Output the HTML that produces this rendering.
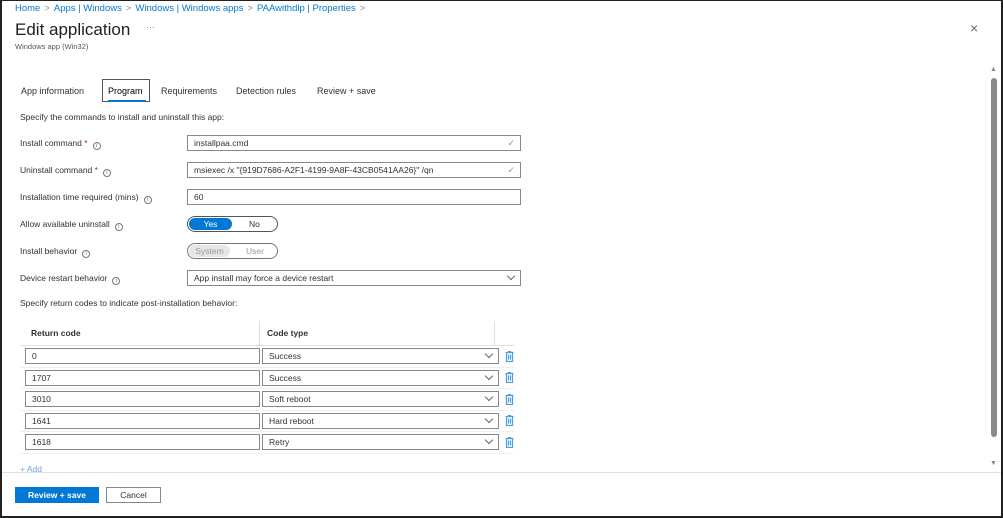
<!DOCTYPE html>
<html><head><meta charset="utf-8"><style>
*{box-sizing:border-box;margin:0;padding:0}
body{width:1003px;height:518px;overflow:hidden;background:#fff;font-family:"Liberation Sans",sans-serif;color:#323130;position:relative}
.frame{position:absolute;left:0;top:0;width:1003px;height:518px;border:2px solid #222;border-top-width:1px;pointer-events:none;z-index:9}
.a{position:absolute;white-space:nowrap}
.bc{top:3px;left:15px;font-size:9.5px;color:#0078d4}
.bc span{color:#888;margin:0 4px}
.lbl{font-size:8.5px;color:#323130}
.req{color:#a4262c}
.i{display:inline-block;width:8px;height:8px;border:1px solid #777;border-radius:50%;font-size:6px;line-height:6px;text-align:center;color:#777;margin-left:5px;vertical-align:-1px}
.in{position:absolute;border:1px solid #8a8886;height:16px;font-size:8.5px;padding:0 6px;line-height:14.5px;color:#323130;background:#fff}
.chk{position:absolute;right:5px;top:0;color:#5cb85c;font-size:9px}
.dd{position:absolute;right:6px;top:2px;width:6px;height:6px;border-right:1px solid #666;border-bottom:1px solid #666;transform:rotate(45deg)}
.tab{top:86px;font-size:9px;color:#323130}
.trash{position:absolute;width:9px;height:11px}
</style></head><body>
<div class="frame"></div>
<div class="a bc">Home<span>&gt;</span>Apps | Windows<span>&gt;</span>Windows | Windows apps<span>&gt;</span>PAAwithdlp | Properties<span>&gt;</span></div>
<div class="a" style="top:20px;left:15px;font-size:17px;color:#201f1e">Edit application</div>
<div class="a" style="top:22px;left:146px;font-size:9px;color:#888">···</div>
<div class="a" style="top:42px;left:15px;font-size:7.5px;color:#555">Windows app (Win32)</div>
<div class="a" style="top:20px;left:970px;font-size:14px;color:#666">×</div>

<div class="a tab" style="left:21px">App information</div>
<div class="a" style="left:102px;top:79px;width:48px;height:23px;border:1px solid #555"></div>
<div class="a tab" style="left:108px;color:#000">Program</div>
<div class="a" style="left:108px;top:100px;width:38px;height:2px;background:#0078d4"></div>
<div class="a tab" style="left:161px">Requirements</div>
<div class="a tab" style="left:236px">Detection rules</div>
<div class="a tab" style="left:317px">Review + save</div>

<div class="a lbl" style="top:112px;left:20px">Specify the commands to install and uninstall this app:</div>

<div class="a lbl" style="top:138px;left:20px">Install command <span class="req">*</span><span class="i">i</span></div>
<div class="in" style="left:187px;top:135px;width:334px">installpaa.cmd<span class="chk">✓</span></div>
<div class="a lbl" style="top:165px;left:20px">Uninstall command <span class="req">*</span><span class="i">i</span></div>
<div class="in" style="left:187px;top:162px;width:334px">msiexec /x "{919D7686-A2F1-4199-9A8F-43CB0541AA26}" /qn<span class="chk">✓</span></div>
<div class="a lbl" style="top:192px;left:20px">Installation time required (mins)<span class="i">i</span></div>
<div class="in" style="left:187px;top:189px;width:334px">60</div>
<div class="a lbl" style="top:219px;left:20px">Allow available uninstall<span class="i">i</span></div>
<div class="a" style="left:187px;top:216px;width:91px;height:16px;border:1px solid #555;border-radius:8px"></div>
<div class="a" style="left:189px;top:218px;width:43px;height:12px;background:#0078d4;border-radius:6px;color:#fff;font-size:8.5px;text-align:center;line-height:12px">Yes</div>
<div class="a lbl" style="left:249px;top:219px">No</div>
<div class="a lbl" style="top:246px;left:20px">Install behavior<span class="i">i</span></div>
<div class="a" style="left:187px;top:243px;width:91px;height:16px;border:1px solid #777;border-radius:8px"></div>
<div class="a" style="left:189px;top:245px;width:41px;height:12px;background:#e6e6e6;border-radius:6px;color:#999;font-size:8.5px;text-align:center;line-height:12px">System</div>
<div class="a lbl" style="left:246px;top:246px;color:#999">User</div>
<div class="a lbl" style="top:273px;left:20px">Device restart behavior<span class="i">i</span></div>
<div class="in" style="left:187px;top:270px;width:334px">App install may force a device restart<span class="dd"></span></div>

<div class="a lbl" style="top:298px;left:20px">Specify return codes to indicate post-installation behavior:</div>

<div class="a" style="left:20px;top:345px;width:494px;height:1px;background:#e1dfdd"></div>
<div class="a" style="left:259px;top:321px;width:1px;height:24px;background:#e1dfdd"></div>
<div class="a" style="left:494px;top:321px;width:1px;height:24px;background:#e1dfdd"></div>
<div class="a" style="left:31px;top:328px;font-size:8.5px;font-weight:bold;color:#323130">Return code</div>
<div class="a" style="left:267px;top:328px;font-size:8.5px;font-weight:bold;color:#323130">Code type</div>

<div id="rows"></div>
<script>
var d=[["0","Success"],["1707","Success"],["3010","Soft reboot"],["1641","Hard reboot"],["1618","Retry"]];
var h="";
d.forEach(function(r,k){var y=348+k*21.5;
h+='<div class="in" style="left:25px;top:'+y+'px;width:235px">'+r[0]+'</div>';
h+='<div class="in" style="left:262px;top:'+y+'px;width:237px">'+r[1]+'<span class="dd"></span></div>';
h+='<svg class="trash" style="left:505px;top:'+(y+2.5)+'px" viewBox="0 0 9 11"><path d="M0.5 1.5h8M3.5 1.5V0.5h2v1M1.5 1.5v9h6v-9M3.5 3.5v5M5.5 3.5v5" stroke="#4a9de0" fill="none" stroke-width="1.2"/></svg>';
h+='<div class="a" style="left:20px;top:'+(y+18.5)+'px;width:494px;height:1px;background:#f0f0f0"></div>';
});
document.getElementById("rows").innerHTML=h;
</script>
<div class="a" style="left:20px;top:464px;font-size:8.5px;color:#6aa5dc;height:8px;overflow:hidden">+ Add</div>

<div class="a" style="left:991px;top:78px;width:6px;height:359px;background:#8a8a8a;border-radius:3px"></div>
<div class="a" style="left:990px;top:66px;font-size:7px;color:#888">▲</div>
<div class="a" style="left:990px;top:460px;font-size:7px;color:#888">▼</div>
<div class="a" style="left:0;top:472px;width:1003px;height:1px;background:#e1dfdd"></div>

<div class="a" style="left:15px;top:487px;width:84px;height:16px;background:#0078d4;color:#fff;font-size:8.5px;text-align:center;line-height:16px;font-weight:bold">Review + save</div>
<div class="a" style="left:106px;top:487px;width:55px;height:16px;border:1px solid #8a8886;font-size:8.5px;text-align:center;line-height:14px">Cancel</div>
</body></html>
